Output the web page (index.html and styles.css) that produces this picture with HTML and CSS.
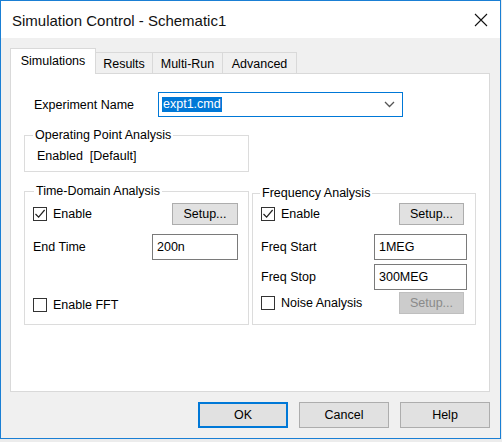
FILE: index.html
```html
<!DOCTYPE html>
<html>
<head>
<meta charset="utf-8">
<link rel="stylesheet" href="styles.css">
</head>
<body>
<div class="window">
  <div class="titlebar">
    <span class="title">Simulation Control - Schematic1</span>
    <svg class="close" width="14" height="14" viewBox="0 0 14 14"><path d="M1 1 L13 13 M13 1 L1 13" stroke="#111" stroke-width="1.1" fill="none"/></svg>
  </div>
  <div class="client">
    <div class="tabs">
      <div class="tab active w-sim">Simulations</div>
      <div class="tab w-res">Results</div>
      <div class="tab w-multi">Multi-Run</div>
      <div class="tab w-adv">Advanced</div>
    </div>
    <div class="panel">
      <div class="exp-row">
        <span class="exp-label">Experiment Name</span>
        <div class="combo">
          <span class="sel">expt1.cmd</span>
          <svg class="chev" width="11" height="7" viewBox="0 0 11 7"><path d="M1 1 L5.5 5.5 L10 1" stroke="#555" stroke-width="1.3" fill="none"/></svg>
        </div>
      </div>
      <fieldset class="group op">
        <legend>Operating Point Analysis</legend>
        <div class="op-text">Enabled&nbsp; [Default]</div>
      </fieldset>
      <div class="groups">
        <fieldset class="group time">
          <legend>Time-Domain Analysis</legend>
          <div class="row r1">
            <span class="check"><span class="box"><svg width="12" height="12" viewBox="0 0 12 12"><path d="M1.5 6 L4.6 9.2 L10.6 2" stroke="#222" stroke-width="1.2" fill="none"/></svg></span>Enable</span>
            <span class="btn setup">Setup...</span>
          </div>
          <div class="row r2">
            <span>End Time</span>
            <span class="input in-time">200n</span>
          </div>
          <div class="row r-fft">
            <span class="check"><span class="box"></span>Enable FFT</span>
          </div>
        </fieldset>
        <fieldset class="group freq">
          <legend>Frequency Analysis</legend>
          <div class="row r1 fr1">
            <span class="check"><span class="box"><svg width="12" height="12" viewBox="0 0 12 12"><path d="M1.5 6 L4.6 9.2 L10.6 2" stroke="#222" stroke-width="1.2" fill="none"/></svg></span>Enable</span>
            <span class="btn setup fsetup">Setup...</span>
          </div>
          <div class="row r2">
            <span>Freq Start</span>
            <span class="input in-freq">1MEG</span>
          </div>
          <div class="row r3">
            <span>Freq Stop</span>
            <span class="input in-freq">300MEG</span>
          </div>
          <div class="row r4">
            <span class="check"><span class="box"></span>Noise Analysis</span>
            <span class="btn setup fsetup disabled">Setup...</span>
          </div>
        </fieldset>
      </div>
    </div>
    <div class="buttons">
      <span class="btn dlg default">OK</span>
      <span class="btn dlg">Cancel</span>
      <span class="btn dlg">Help</span>
    </div>
  </div>
</div>
</body>
</html>
```

FILE: styles.css
```css
* { box-sizing: border-box; }
body {
  margin: 0;
  background: #ececec;
  font-family: "Liberation Sans", Arial, sans-serif;
  font-size: 12.5px;
  color: #000;
}
.window {
  width: 501px;
  height: 439px;
  border: 1px solid #1a7fd4;
  background: #f0f0f0;
  display: flex;
  flex-direction: column;
}
.titlebar {
  flex: none;
  height: 37px;
  background: #fff;
  display: flex;
  align-items: center;
  justify-content: space-between;
  padding: 1px 12px 0 11px;
}
.title { font-size: 15px; color: #111; }
.client {
  flex: 1;
  padding: 10px 10px 0 9px;
  display: flex;
  flex-direction: column;
}
.tabs {
  display: flex;
  align-items: flex-end;
  height: 25px;
}
.tab {
  height: 21px;
  border: 1px solid #d9d9d9;
  border-bottom: none;
  margin-left: -1px;
  background: #f0f0f0;
  display: flex;
  align-items: center;
  justify-content: center;
  padding-top: 1px;
}
.tab.active {
  height: 26px;
  margin-left: 0;
  margin-bottom: -1px;
  background: #fff;
  position: relative;
  z-index: 1;
  padding-top: 0;
  padding-bottom: 1px;
}
.w-sim { width: 86px; }
.w-res { width: 58px; }
.w-multi { width: 71px; }
.w-adv { width: 75px; }
.panel {
  width: 480px;
  height: 319px;
  background: #fff;
  border: 1px solid #d9d9d9;
  padding: 18px 0 0 13px;
}
.exp-row {
  display: flex;
  align-items: center;
  height: 25px;
}
.exp-label { width: 134px; padding-left: 10px; }
.combo {
  width: 245px;
  height: 25px;
  border: 1px solid #0078d7;
  display: flex;
  align-items: center;
  justify-content: space-between;
  padding: 0 7px 0 3px;
}
.sel {
  background: #0078d7;
  color: #fff;
  line-height: 15px;
  padding: 0 1px;
}
.group {
  margin: 0;
  border: 1px solid #dcdcdc;
  min-width: 0;
}
.group legend {
  padding: 0 2px;
  line-height: 15px;
}
.op {
  width: 225px;
  margin-top: 11px;
  padding: 0 12px 7px;
}
.op legend { margin-left: -4px; }
.op-text { margin-top: 6px; line-height: 15px; }
.groups {
  display: grid;
  grid-template-columns: 225px 224px;
  column-gap: 3px;
  margin-top: 12px;
}
.time { padding: 0 10px 8px 8px; }
.time legend { margin-left: 1px; }
.freq { padding: 0 8px 8px 8px; margin-top: 2px; }
.freq legend { margin-left: -1px; }
.row {
  display: flex;
  align-items: center;
  justify-content: space-between;
}
.r1 { margin-top: 4px; height: 22px; }
.fr1 { margin-top: 2px; }
.r2 { margin-top: 9px; height: 26px; }
.r3 { margin-top: 4px; height: 26px; }
.r4 { margin-top: 2px; height: 22px; }
.r-fft { margin-top: 34px; height: 22px; }
.check { display: flex; align-items: center; gap: 6px; }
.box {
  width: 14px;
  height: 14px;
  border: 1px solid #333;
  background: #fff;
  display: flex;
  align-items: center;
  justify-content: center;
}
.btn {
  display: flex;
  align-items: center;
  justify-content: center;
  background: #e1e1e1;
  border: 1px solid #adadad;
}
.setup { width: 66px; height: 22px; }
.fsetup { width: 65px; margin-right: 3px; }
.disabled { background: #cccccc; border-color: #bfbfbf; color: #8a8a8a; }
.input {
  height: 26px;
  border: 1px solid #7a7a7a;
  background: #fff;
  display: flex;
  align-items: center;
  padding-left: 4px;
}
.in-time { width: 86px; }
.in-freq { width: 93px; }
.buttons {
  display: flex;
  justify-content: flex-end;
  gap: 11px;
  margin-top: 10px;
}
.dlg { width: 90px; height: 26px; }
.dlg.default { border: 2px solid #0078d7; }
```
